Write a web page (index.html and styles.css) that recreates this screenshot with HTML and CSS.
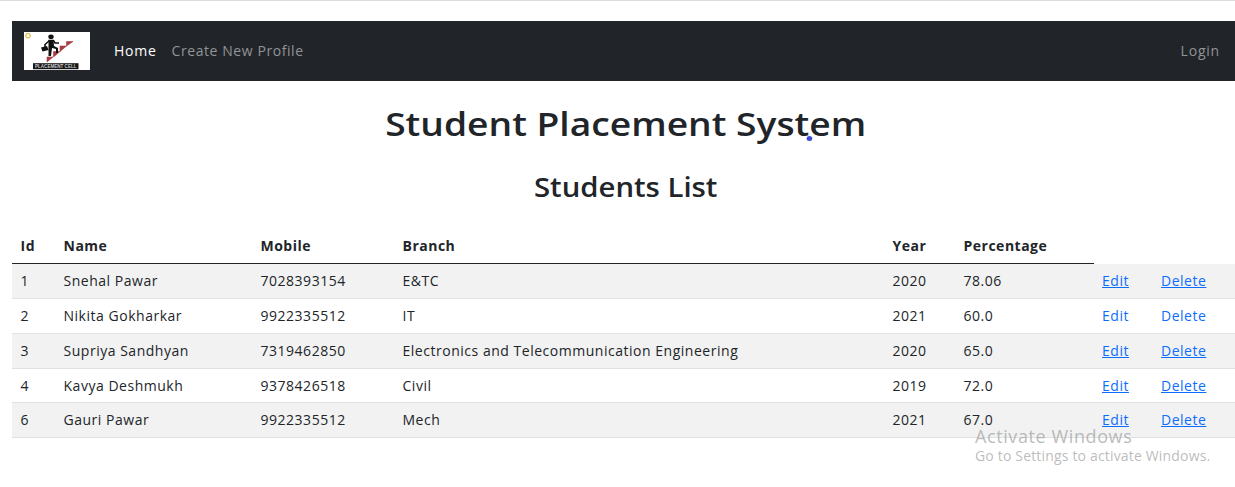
FILE: index.html
```html
<!DOCTYPE html>
<html lang="en">
<head>
<meta charset="utf-8">
<title>Student Placement System</title>
<link rel="stylesheet" href="styles.css">
</head>
<body>
<div class="page">
  <nav class="navbar">
    <a class="brand" href="#">
      <svg width="66" height="38" viewBox="0 0 66 38">
        <rect width="66" height="38" fill="#fff"/>
        <circle cx="4" cy="3.600" r="2.300" fill="#fff8dc" stroke="#dfc66a" stroke-width="1.300"/>
        <path d="M23 30v-5h6zM29.500 25v-5.500h6.500zM36 19.500v-5.500h6.500zM42.500 14v-4.500h6.500z" fill="#a83c40" stroke="#a83c40" stroke-width=".6"/>
        <ellipse cx="27" cy="4.800" rx="2.700" ry="2.300" fill="#111"/>
        <path d="M24.500 8.500l5 0 1.500 2.500h4M25 9l-4 3.500v3" fill="none" stroke="#111" stroke-width="1.600"/>
        <path d="M24.500 8h5l.5 6 4 2v5h-2v-4l-4-1-1 8h-2.500z" fill="#111"/>
        <path d="M17 15.500l6-1.500 1.500 4-6 1.500z" fill="#111"/>
        <rect x="9" y="31.200" width="45.500" height="6" fill="#151515"/>
        <text x="11" y="36.200" class="logo-text" textLength="41.500" lengthAdjust="spacingAndGlyphs">PLACEMENT CELL</text>
      </svg>
    </a>
    <a class="nav-link active home" href="#">Home</a>
    <a class="nav-link create" href="#">Create New Profile</a>
    <a class="nav-link login" href="#">Login</a>
  </nav>
  <h1 class="title">Student Placement Syst<span class="dot-anchor">e<i class="pointer"></i></span>m</h1>
  <h2 class="subtitle">Students List</h2>
  <table class="students">
    <colgroup><col class="c-id"><col class="c-name"><col class="c-mobile"><col class="c-branch"><col class="c-year"><col class="c-pct"><col class="c-edit"><col class="c-del"></colgroup>
    <thead><tr><th>Id</th><th>Name</th><th>Mobile</th><th>Branch</th><th>Year</th><th>Percentage</th></tr></thead>
    <tbody>
      <tr><td>1</td><td>Snehal Pawar</td><td>7028393154</td><td>E&amp;TC</td><td>2020</td><td>78.06</td><td><a href="#">Edit</a></td><td><a href="#">Delete</a></td></tr>
      <tr class="plain"><td>2</td><td>Nikita Gokharkar</td><td>9922335512</td><td>IT</td><td>2021</td><td>60.0</td><td><a href="#">Edit</a></td><td><a href="#">Delete</a></td></tr>
      <tr><td>3</td><td>Supriya Sandhyan</td><td>7319462850</td><td>Electronics and Telecommunication Engineering</td><td>2020</td><td>65.0</td><td><a href="#">Edit</a></td><td><a href="#">Delete</a></td></tr>
      <tr class="short"><td>4</td><td>Kavya Deshmukh</td><td>9378426518</td><td>Civil</td><td>2019</td><td>72.0</td><td><a href="#">Edit</a></td><td><a href="#">Delete</a></td></tr>
      <tr><td>6</td><td>Gauri Pawar</td><td>9922335512</td><td>Mech</td><td>2021</td><td>67.0</td><td><a href="#">Edit</a></td><td><a href="#">Delete</a></td></tr>
    </tbody>
  </table>
  <div class="watermark"><div class="wm-title">Activate Windows</div><div class="wm-text">Go to Settings to activate Windows.</div></div>
</div>
</body>
</html>
```
FILE: styles.css
```css
* { box-sizing: border-box; }
body {
  margin: 0;
  background: #fff;
  color: #212529;
  font: 14px/20px "Open Sans", "Noto Sans", sans-serif;
  overflow: hidden;
}
.page {
  position: relative;
  height: 487px;
  border-top: 1px solid #dbdbdb;
  padding: 20px 0 0 12px;
}
.navbar {
  display: flex;
  align-items: center;
  height: 60px;
  padding: 0 15px 0 12px;
  background: #212529;
}
.brand { display: flex; margin-right: 24px; }
.logo-text { font: bold 5px "Liberation Sans", sans-serif; fill: #c8c8c8; }
.nav-link { color: #919395; text-decoration: none; }
.nav-link.active { color: #fff; }
.home { margin-right: 15px; letter-spacing: 0.75px; }
.create { letter-spacing: 0.57px; }
.login { margin-left: auto; letter-spacing: 0.8px; }
.title, .subtitle { width: fit-content; margin: 0 auto; font-weight: 600; white-space: nowrap; }
.title { margin-top: 21px; padding-left: 4px; font-size: 33px; line-height: 44px; transform: scaleX(1.127); }
.subtitle { margin-top: 20px; padding-left: 4px; font-size: 27px; line-height: 42px; transform: scaleX(1.085); }
.dot-anchor { position: relative; }
.pointer {
  position: absolute;
  left: -2px;
  bottom: 5px;
  width: 5px;
  height: 5px;
  border-radius: 50%;
  background: #4148d8;
}
.students {
  width: 1223px;
  margin-top: 21px;
  table-layout: fixed;
  border-collapse: separate;
  border-spacing: 0;
}
.c-id { width: 43px; }
.c-name { width: 197px; }
.c-mobile { width: 142px; }
.c-branch { width: 490px; }
.c-year { width: 71px; }
.c-pct { width: 139px; }
.c-edit { width: 59px; }
.c-del { width: 82px; }
th, td { padding: 0 8px 0 8.5px; text-align: left; white-space: nowrap; }
th { height: 35px; border-bottom: 1px solid #212529; font-weight: 700; letter-spacing: 0.5px; }
td { height: 35px; border-bottom: 1px solid #dee2e6; letter-spacing: 0.52px; }
td:nth-child(n+7) { padding-left: 8px; }
.short td { height: 34px; }
tbody tr:nth-child(odd) td { background: #f2f2f2; }
td a { color: #0d6efd; text-decoration: underline; }
.plain a { text-decoration: none; }
.watermark { position: absolute; left: 975px; top: 424px; color: rgba(150, 150, 150, 0.65); white-space: nowrap; }
.wm-title { font-size: 18px; line-height: 22px; letter-spacing: 0.6px; }
.wm-text { font-size: 14px; line-height: 18px; letter-spacing: 0.17px; }
```
